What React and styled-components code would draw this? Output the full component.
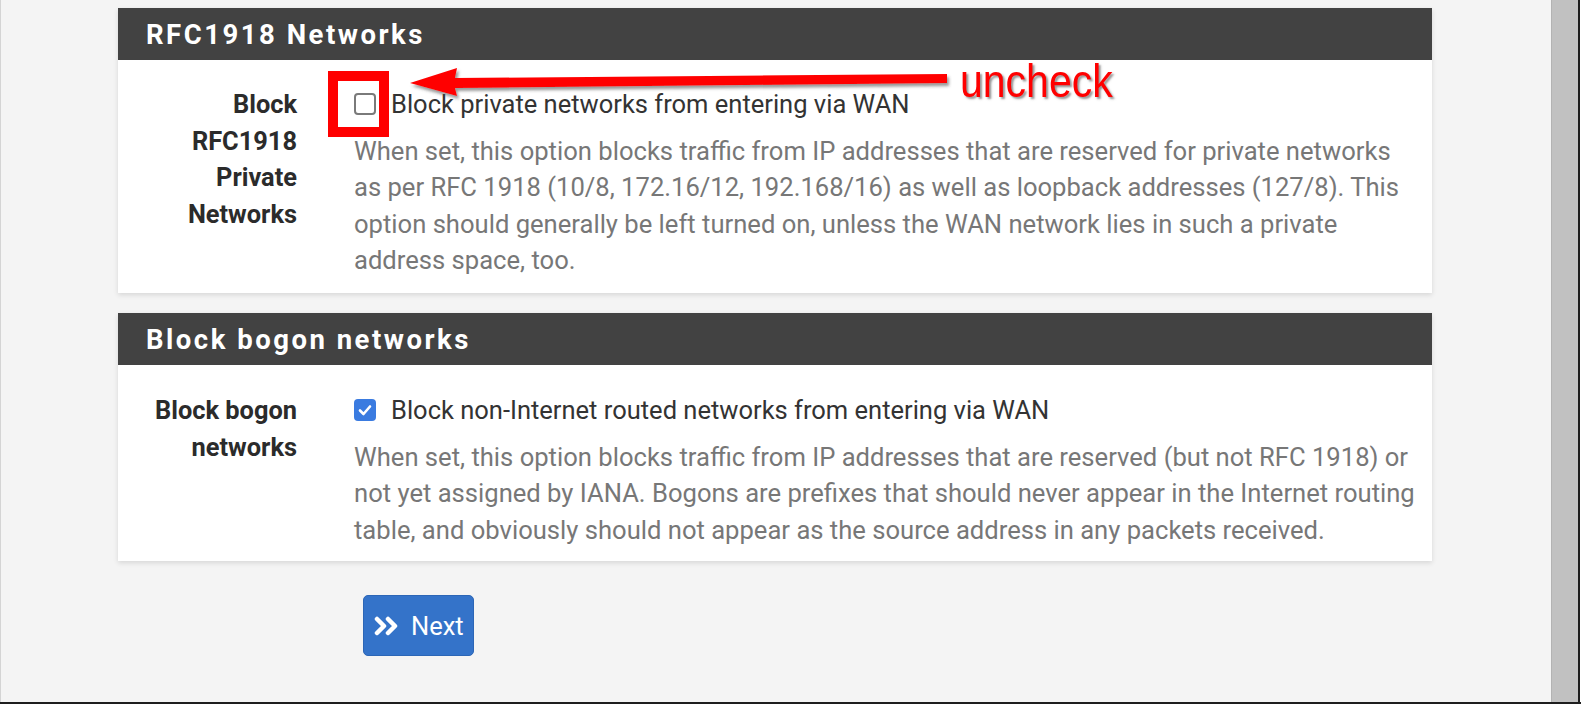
import React from "react";
import styled, { createGlobalStyle } from "styled-components";

const Global = createGlobalStyle`
  html, body { margin: 0; padding: 0; background: #f4f4f4; }
  body { font-family: Roboto, "Noto Sans", sans-serif; overflow: hidden; }
  * { box-sizing: border-box; }
`;

const Frame = styled.div`
  position: relative;
  display: flex;
  width: 1581px;
  height: 704px;
  border-bottom: 2px solid #1e1e1e;
`;

const Viewport = styled.div`
  flex: 1;
  background: #f4f4f4;
  border-left: 1px solid #d4d4d4;
  padding: 8px 0 0 117px;
`;

const Scrollbar = styled.div`
  width: 27px;
  background: #c1c1c1;
  border-left: 1px solid #b3b3b3;
`;

const EdgeDark = styled.div`
  width: 2px;
  background: #1e1e1e;
`;

const EdgeLight = styled.div`
  width: 1px;
  background: #ffffff;
`;

const Stack = styled.div`
  width: 1314px;
  display: flex;
  flex-direction: column;
`;

const Card = styled.section`
  background: #ffffff;
  box-shadow: 0 2px 5px rgba(0, 0, 0, 0.12);
  margin-top: ${(p) => p.$gap || 0}px;
`;

const Header = styled.h2`
  margin: 0;
  height: 52px;
  background: #424242;
  color: #ffffff;
  display: flex;
  align-items: center;
  padding-left: 28px;
  font-family: Roboto, sans-serif;
  font-weight: 700;
  font-size: 27.5px;
  letter-spacing: 2.5px;
`;

const Body = styled.div`
  display: grid;
  grid-template-columns: 179px 1fr;
  column-gap: 57px;
  padding: ${(p) => p.$top}px 12px ${(p) => p.$bottom}px 0;
`;

const Label = styled.div`
  text-align: right;
  font-weight: 700;
  font-size: 25.4px;
  line-height: 36.5px;
  color: #2b2b2b;
`;

const Field = styled.div`
  display: flex;
  flex-direction: column;
`;

const CheckRow = styled.label`
  display: flex;
  align-items: center;
  height: 36.5px;
  gap: 15px;
  font-size: 25.5px;
  color: #333;
  white-space: nowrap;
`;

const Box = styled.span`
  width: 22px;
  height: 22px;
  flex: none;
  border-radius: 4px;
  display: flex;
  align-items: center;
  justify-content: center;
  border: ${(p) => (p.$checked ? "none" : "2px solid #7a7a7a")};
  background: ${(p) => (p.$checked ? "#3a7be0" : "#fff")};
`;

const Help = styled.p`
  margin: 10px 0 0;
  font-size: 25.6px;
  line-height: 36.5px;
  color: #777;
  white-space: nowrap;
`;

const ButtonRow = styled.div`
  padding: 34px 0 0 245px;
`;

const NextButton = styled.button`
  width: 111px;
  height: 61px;
  border-radius: 5px;
  background: #3473c9;
  border: 1px solid #2c66b6;
  color: #fff;
  font-family: Roboto, sans-serif;
  font-size: 25.5px;
  display: flex;
  align-items: center;
  gap: 9px;
  padding: 0 0 0 10px;
`;

const Annot = styled.div`
  position: absolute;
  left: ${(p) => p.$x}px;
  top: ${(p) => p.$y}px;
`;

const RedBox = styled(Annot)`
  width: 61px;
  height: 66px;
  border: 10px solid #ff0000;
`;

const Uncheck = styled(Annot)`
  font-family: "Liberation Sans", Arial, sans-serif;
  font-size: 41px;
  color: #ff0000;
  transform: scaleY(1.12);
  transform-origin: top left;
  text-shadow: 2px 2px 2px rgba(60, 60, 60, 0.55);
  line-height: 1;
`;

const Check = ({ checked }) => (
  <Box $checked={checked}>
    {checked && (
      <svg width="16" height="16" viewBox="0 0 16 16">
        <path d="M3 8.5 L6.5 12 L13 4.5" fill="none" stroke="#fff" strokeWidth="2.6" strokeLinecap="round" strokeLinejoin="round" />
      </svg>
    )}
  </Box>
);

export default function App() {
  return (
    <>
      <Global />
      <Frame>
        <Viewport>
          <Stack>
            <Card>
              <Header>RFC1918 Networks</Header>
              <Body $top={26} $bottom={14.5}>
                <Label>
                  Block<br />RFC1918<br />Private<br />Networks
                </Label>
                <Field>
                  <CheckRow>
                    <Check checked={false} />
                    Block private networks from entering via WAN
                  </CheckRow>
                  <Help>
                    When set, this option blocks traffic from IP addresses that are reserved for private networks<br />
                    as per RFC 1918 (10/8, 172.16/12, 192.168/16) as well as loopback addresses (127/8). This<br />
                    option should generally be left turned on, unless the WAN network lies in such a private<br />
                    address space, too.
                  </Help>
                </Field>
              </Body>
            </Card>
            <Card $gap={20}>
              <Header>Block bogon networks</Header>
              <Body $top={27} $bottom={13}>
                <Label>
                  Block bogon<br />networks
                </Label>
                <Field>
                  <CheckRow>
                    <Check checked />
                    Block non-Internet routed networks from entering via WAN
                  </CheckRow>
                  <Help>
                    When set, this option blocks traffic from IP addresses that are reserved (but not RFC 1918) or<br />
                    not yet assigned by IANA. Bogons are prefixes that should never appear in the Internet routing<br />
                    table, and obviously should not appear as the source address in any packets received.
                  </Help>
                </Field>
              </Body>
            </Card>
            <ButtonRow>
              <NextButton>
                <svg width="28" height="22" viewBox="0 0 28 22">
                  <path d="M3 4 L10 11 L3 18 M14 4 L21 11 L14 18" fill="none" stroke="#fff" strokeWidth="4.5" strokeLinecap="round" strokeLinejoin="round" />
                </svg>
                Next
              </NextButton>
            </ButtonRow>
          </Stack>
        </Viewport>
        <Scrollbar />
        <EdgeDark />
        <EdgeLight />
        <RedBox $x={328} $y={71} />
        <Annot $x={405} $y={62}>
          <svg width="550" height="44" viewBox="0 0 550 44" style={{ overflow: "visible" }}>
            <defs>
              <filter id="sh" x="-5%" y="-50%" width="110%" height="200%">
                <feDropShadow dx="2" dy="3" stdDeviation="1.5" floodColor="#444" floodOpacity="0.55" />
              </filter>
            </defs>
            <polygon
              points="5,21 52,6 50,16 542,12 542,21 50,26 52,34"
              fill="#ff0000"
              filter="url(#sh)"
            />
          </svg>
        </Annot>
        <Uncheck $x={960} $y={59}>uncheck</Uncheck>
      </Frame>
    </>
  );
}
